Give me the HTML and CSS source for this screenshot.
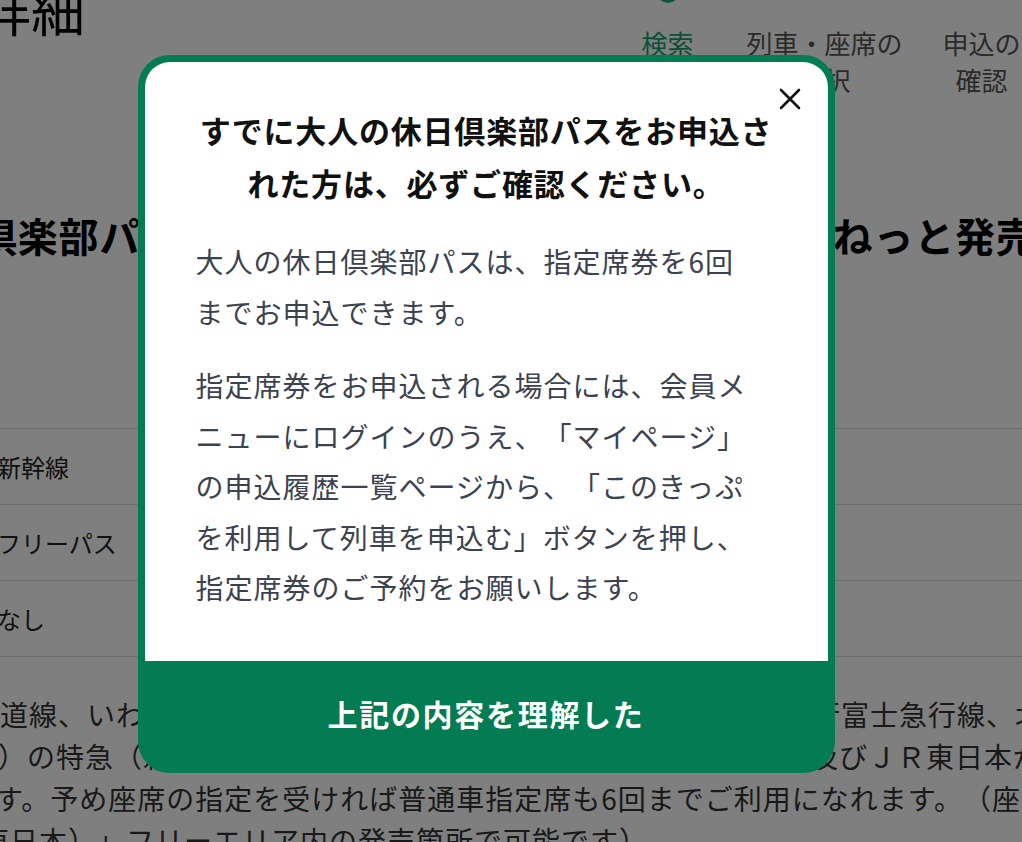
FILE: index.html
```html
<!DOCTYPE html>
<html lang="ja">
<head>
  <meta charset="UTF-8" />
  <meta name="viewport" content="width=device-width, initial-scale=1.0"/>
  <title>きっぷ詳細</title>
  <link rel="stylesheet" href="styles.css">
</head>
<body>

<div class="page">
  <header class="page-head">
    <h1 class="page-title">詳細</h1>
    <ol class="steps">
      <li class="step is-current"><span class="step-dot"></span>検索</li>
      <li class="step"><span class="step-dot"></span>列車・座席の<br>選択</li>
      <li class="step"><span class="step-dot"></span>申込の<br>確認</li>
    </ol>
  </header>

  <h2 class="pass-name">倶楽部パス（東日本・北海道）：ご予約はえきねっと発売</h2>

  <table class="spec">
    <tr><td>新幹線</td></tr>
    <tr><td>フリーパス</td></tr>
    <tr><td>なし</td></tr>
  </table>

  <p class="note">
    <span class="note-line l1">道線、いわて銀河鉄道線、青い森鉄道線、三陸鉄道線、北越急行富士急行線、北越急行線</span>
    <span class="note-line l2">）の特急（新幹線を含む）・急行・普通列車の普通車自由席、及びＪＲ東日本が運行する</span>
    <span class="note-line l3">す。予め座席の指定を受ければ普通車指定席も6回までご利用になれます。（座席の指定</span>
    <span class="note-line l4">東日本）」フリーエリア内の発売箇所で可能です）</span>
  </p>
</div>

<div class="popup">
  <div class="popup-content">
    <button class="btn-close" aria-label="閉じる">
      <svg width="22" height="22" viewBox="0 0 22 22"><path d="M2 2 L20 20 M20 2 L2 20" stroke="#111" stroke-width="2.6" stroke-linecap="round" fill="none"/></svg>
    </button>
    <div class="popup-body">
      <h3>すでに大人の休日倶楽部パスをお申込された方は、必ずご確認ください。</h3>
      <p>大人の休日倶楽部パスは、指定席券を6回までお申込できます。</p>
      <p>指定席券をお申込される場合には、会員メニューにログインのうえ、「マイページ」の申込履歴一覧ページから、「このきっぷを利用して列車を申込む」ボタンを押し、指定席券のご予約をお願いします。</p>
    </div>
    <button class="btn-agree">上記の内容を理解した</button>
  </div>
</div>

</body>
</html>
```

FILE: styles.css
```css
* { box-sizing: border-box; margin: 0; padding: 0; }
body {
  font-family: "Noto Sans CJK JP", "Noto Sans", sans-serif;
  background: #fff;
  color: #000;
  overflow: hidden;
  height: 842px;
  text-spacing-trim: space-all;
}

/* page behind the popup */
.page {
  width: 1130px;
  margin-left: -23px;
  padding-right: 47px;
}

.page-head {
  display: flex;
  justify-content: space-between;
  align-items: flex-start;
}

.page-title {
  font-size: 54px;
  line-height: 54px;
  font-weight: 400;
  margin-top: -18px;
}

.steps {
  list-style: none;
  display: flex;
  margin-top: -19px;
}
.step {
  width: 157px;
  display: flex;
  flex-direction: column;
  align-items: center;
  text-align: center;
  font-size: 26px;
  line-height: 37px;
  color: #555;
}
.step-dot {
  width: 22px;
  height: 22px;
  border-radius: 50%;
  background: #fff;
  margin-bottom: 21px;
}
.step.is-current { color: #16a26c; }
.step.is-current .step-dot { background: #17b274; }

.pass-name {
  font-size: 40px;
  letter-spacing: 0.8px;
  line-height: 56px;
  font-weight: 700;
  white-space: nowrap;
  margin-top: 109px;
}

.spec {
  width: 100%;
  border-collapse: collapse;
  margin-top: 165px;
}
.spec td {
  height: 76px;
  border-top: 1px solid #d8d8d8;
  border-bottom: 1px solid #d8d8d8;
  padding-left: 20px;
  font-size: 24px;
  color: #222;
}

.note {
  margin-top: 36px;
  font-size: 28px;
  letter-spacing: 1px;
  line-height: 42px;
  color: #333;
}
.note-line {
  display: block;
  white-space: nowrap;
}
.note-line.l1 { margin-left: 23px; }
.note-line.l2 { margin-left: 21px; }
.note-line.l3 { margin-left: 18px; }
.note-line.l4 { margin-left: 4px; }

/* popup */
.popup {
  position: fixed;
  top: 0; left: 0; right: 0; bottom: 0;
  background: rgba(0,0,0,0.5);
  display: flex;
  justify-content: center;
  align-items: center;
  padding-right: 50px;
  padding-bottom: 14px;
}

.popup-content {
  position: relative;
  width: 697px;
  background: #037b53;
  border: 7px solid #037b53;
  border-radius: 32px;
  overflow: hidden;
}

.btn-close {
  position: absolute;
  top: 26px;
  right: 27px;
  width: 22px;
  height: 22px;
  background: none;
  border: none;
  display: flex;
  z-index: 1;
}

.popup-body {
  background: #fff;
  padding: 41px 51px 48px;
}

.popup-body h3 {
  font-size: 31px;
  letter-spacing: 0.8px;
  line-height: 53px;
  font-weight: 700;
  color: #111;
  text-align: center;
  margin-bottom: 27px;
}

.popup-body p {
  font-size: 28px;
  letter-spacing: 1px;
  line-height: 50.5px;
  color: #3b4251;
  padding-right: 20px;
}
.popup-body p + p {
  margin-top: 23px;
}

.btn-agree {
  display: block;
  width: 100%;
  height: 105px;
  background: #037b53;
  border: none;
  color: #fff;
  font-family: inherit;
  font-size: 30px;
  letter-spacing: 1.7px;
  font-weight: 700;
}
```
